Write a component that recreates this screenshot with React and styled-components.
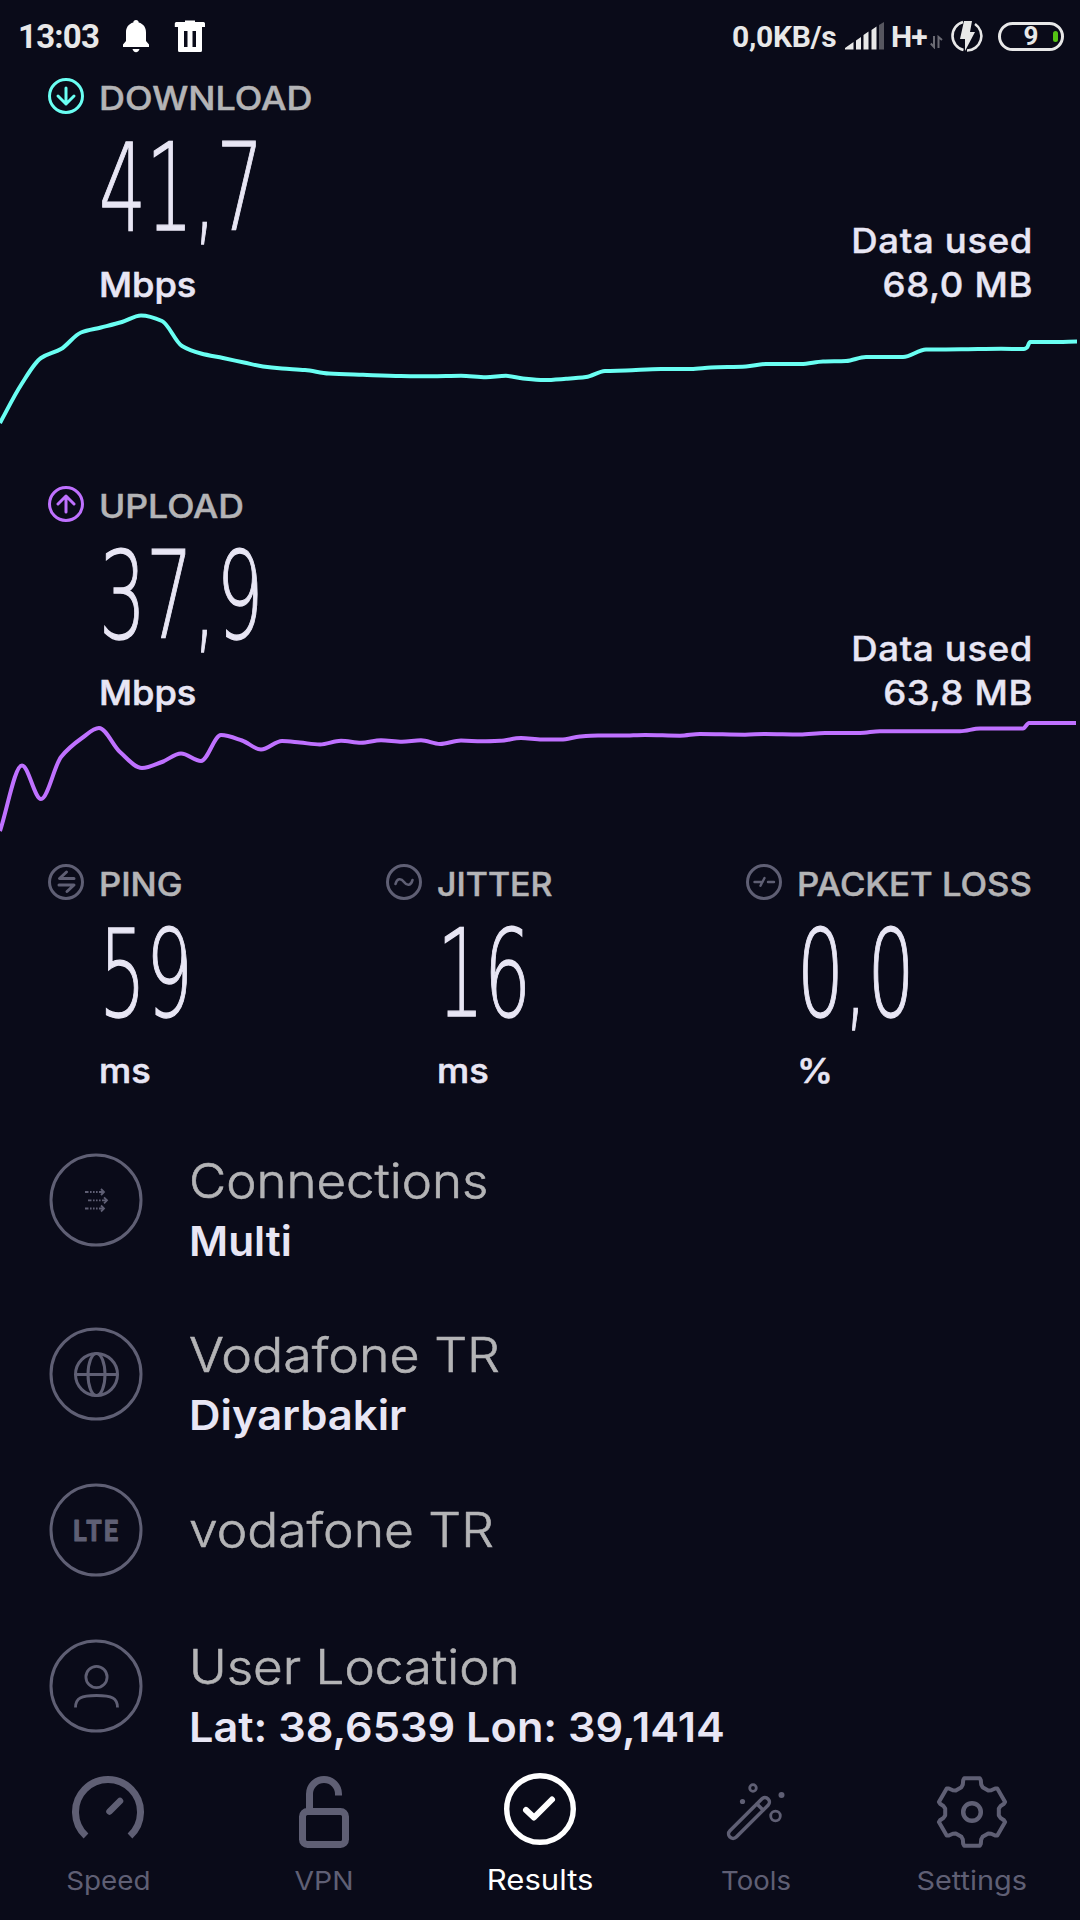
import React from 'react';
import styled, { createGlobalStyle } from 'styled-components';

const palette = {
  bg: '#0a0b19',
  text: '#e8e6f4',
  label: '#b4b4b6',
  icon: '#5f5f74',
  status: '#e8e8e8',
  download: '#6afff3',
  upload: '#bf71ff',
};

const GlobalStyle = createGlobalStyle`
  * {
    box-sizing: border-box;
  }
  body {
    margin: 0;
    background: ${palette.bg};
  }
  svg {
    display: block;
    flex-shrink: 0;
  }
`;

const Page = styled.div`
  width: 1080px;
  height: 1920px;
  display: flex;
  flex-direction: column;
  overflow: hidden;
  background: ${palette.bg};
  color: ${palette.text};
  font-family: Inter, 'Noto Sans', sans-serif;
  white-space: nowrap;
`;

const StatusBar = styled.header`
  height: 72px;
  padding: 0 16px 0 18px;
  display: flex;
  justify-content: space-between;
  align-items: center;
  font-family: Roboto, sans-serif;
  font-weight: 700;
  color: ${palette.status};
`;

const StatusGroup = styled.div`
  display: flex;
  align-items: center;
`;

const Clock = styled.span`
  width: 104px;
  font-size: 33px;
  letter-spacing: -0.8px;
`;

const StatusText = styled.span`
  width: ${({ $width }) => $width}px;
  font-size: 30px;
  letter-spacing: ${({ $spacing }) => $spacing || 0}px;
`;

const TrashIcon = styled.svg`
  margin-left: 24px;
`;

const SignalIcon = styled.svg`
  margin-right: 6px;
`;

const TrafficIcon = styled.svg`
  margin: 11px 6px 0 2px;
`;

const Battery = styled.div`
  position: relative;
  width: 66px;
  height: 29px;
  margin-left: 14px;
  border: 3px solid ${palette.status};
  border-radius: 15px;
  display: flex;
  justify-content: center;
  align-items: center;
  font-size: 26px;
  line-height: 1;
  &::after {
    content: '';
    position: absolute;
    right: 3px;
    top: 6px;
    width: 5px;
    height: 11px;
    border-radius: 3px;
    background: #55c314;
  }
`;

const SpeedSection = styled.section`
  display: flex;
  flex-direction: column;
  margin-bottom: ${({ $gap }) => $gap}px;
`;

const MetricHead = styled.div`
  height: 48px;
  display: flex;
  align-items: center;
  gap: 15px;
`;

const MetricLabel = styled.h2`
  margin: 5px 0 0;
  font-size: 32px;
  font-weight: 500;
  line-height: 48px;
  color: ${palette.label};
  -webkit-text-stroke: 0.5px ${palette.label};
  transform: scaleX(${({ $stretch }) => $stretch || 1});
  transform-origin: left;
`;

const MetricBody = styled.div`
  height: 188px;
  padding: 0 47px 1px 99px;
  display: flex;
  justify-content: space-between;
  align-items: flex-end;
`;

const SpeedHead = styled(MetricHead)`
  padding-left: 48px;
`;

const Digits = styled.div`
  height: 131px;
  width: 160px;
  font-family: 'DejaVu Sans', sans-serif;
  font-size: 122px;
  font-weight: 200;
  line-height: 137px;
  -webkit-text-stroke: 1.3px ${palette.text};
  transform: scaleX(0.606);
  transform-origin: left;
`;

const Unit = styled.div`
  margin-top: 12px;
  font-size: 34px;
  font-weight: 500;
  line-height: 44px;
  -webkit-text-stroke: 0.6px ${palette.text};
  transform: scaleX(1.065);
  transform-origin: left;
`;

const DataUsed = styled.div`
  font-size: 34px;
  font-weight: 500;
  line-height: 44px;
  text-align: right;
  letter-spacing: 0.6px;
  -webkit-text-stroke: 0.4px ${palette.text};
  transform: scaleX(1.075);
  transform-origin: right;
`;

const Latency = styled.section`
  display: flex;
  padding-left: 48px;
  height: 294px;
`;

const LatencyItem = styled.div`
  width: ${({ $width }) => $width}px;
`;

const LatencyValue = styled.div`
  padding-left: 51px;
`;

const Details = styled.ul`
  flex: 1;
  margin: 0;
  padding: 0 0 0 48px;
  list-style: none;
`;

const DetailRow = styled.li`
  height: ${({ $height }) => $height}px;
  display: flex;
  align-items: flex-start;
  gap: 45px;
`;

const DetailText = styled.div`
  min-height: 96px;
  display: flex;
  flex-direction: column;
  justify-content: center;
`;

const DetailTitle = styled.div`
  font-size: 48px;
  font-weight: 300;
  line-height: 58px;
  color: ${palette.label};
  -webkit-text-stroke: 0.6px ${palette.label};
  transform: scaleX(${({ $stretch }) => $stretch || 1});
  transform-origin: left;
`;

const DetailValue = styled.div`
  font-size: 41px;
  font-weight: 600;
  line-height: 62px;
  transform: scaleX(${({ $stretch }) => $stretch || 1});
  transform-origin: left;
`;

const NavBar = styled.nav`
  height: 160px;
  display: grid;
  grid-template-columns: repeat(5, 1fr);
`;

const NavItem = styled.a`
  display: flex;
  flex-direction: column;
  align-items: center;
  padding-top: ${({ $active }) => ($active ? 13 : 16)}px;
  gap: ${({ $active }) => ($active ? 17 : 15)}px;
  color: ${({ $active }) => ($active ? '#fff' : palette.icon)};
`;

const NavLabel = styled.span`
  font-size: ${({ $large }) => ($large ? 28 : 26)}px;
  line-height: 36px;
  transform: scaleX(${({ $stretch }) => $stretch || 1});
`;

const downloadPoints = [
  [0, 423], [20, 385], [40, 358], [60, 349], [80, 332.5], [100, 327.5], [121, 322], [140, 315.5],
  [161, 321], [181, 346], [200, 353.5], [222, 358], [243, 362.5], [262, 366.5], [281, 368.5],
  [304, 370], [328, 373.5], [362, 374.8], [400, 376], [430, 376.3], [460, 375.8], [485, 377.2],
  [505, 375.8], [522, 378.5], [543, 380], [565, 378.8], [585, 377], [604, 371], [625, 370.5],
  [660, 369], [690, 369], [710, 367.5], [745, 366.5], [765, 364], [800, 364], [822, 361.5],
  [845, 361], [865, 357], [902, 357], [925, 349.5], [960, 349.3], [1000, 348.8], [1023, 349],
  [1026, 347.5], [1029, 342], [1050, 342], [1076, 341.5],
].map(([x, y]) => [x ? x + 1 : x, y]);

const uploadPoints = [
  [0, 831], [22, 765.5], [41, 799], [61, 757], [82, 738], [99, 728], [120, 752], [142, 768],
  [162, 762], [181, 753.5], [201, 761], [221, 735], [242, 740.5], [261, 749.5], [282, 741],
  [300, 742.5], [320, 744.5], [341, 740.7], [361, 742.7], [381, 740.3], [402, 741.7],
  [421, 740.3], [440, 744], [461, 740.5], [482, 741.3], [500, 740.8], [521, 738], [542, 739.5],
  [561, 739.5], [580, 736.5], [598, 735.5], [622, 735.6], [645, 735], [680, 735.7], [700, 734],
  [745, 734.7], [765, 734], [800, 734.5], [825, 733], [860, 733], [880, 731.2], [960, 731.3],
  [980, 728.5], [1023, 728.5], [1029, 723], [1076, 723],
];

// cubic curve through the points, flat at local peaks so it never overshoots
const smoothPath = (points) => {
  const slope = (a, b) => (b[1] - a[1]) / (b[0] - a[0]);
  const tangents = points.map((p, i) => {
    if (i === 0) return slope(p, points[1]);
    if (i === points.length - 1) return slope(points[i - 1], p);
    const s0 = slope(points[i - 1], p);
    const s1 = slope(p, points[i + 1]);
    return s0 * s1 <= 0 ? 0 : (2 * s0 * s1) / (s0 + s1);
  });
  return points.reduce((d, p, i) => {
    if (i === 0) return `M${p[0]} ${p[1]}`;
    const prev = points[i - 1];
    const dx = (p[0] - prev[0]) / 3;
    return `${d}C${prev[0] + dx} ${prev[1] + dx * tangents[i - 1]} ${p[0] - dx} ${p[1] - dx * tangents[i]} ${p[0]} ${p[1]}`;
  }, '');
};

const Chart = ({ points, top, color }) => (
  <svg width='1080' height='130' viewBox={`0 ${top} 1080 130`} fill='none' stroke={color} strokeWidth='4'>
    <path d={smoothPath(points)} />
  </svg>
);

const RoundIcon = ({ color = palette.icon, strokeWidth = 3, children }) => (
  <svg
    width='36'
    height='36'
    viewBox='-18 -18 36 36'
    fill='none'
    stroke={color}
    strokeWidth={strokeWidth}
    strokeLinecap='round'
    strokeLinejoin='round'
  >
    <circle r='16.5' strokeWidth='3' />
    {children}
  </svg>
);

const DetailIcon = ({ children }) => (
  <svg width='96' height='96' viewBox='-48 -48 96 96' fill='none' stroke={palette.icon} strokeWidth='3'>
    <circle r='45' strokeWidth='3' />
    {children}
  </svg>
);

const NavIcon = ({ children }) => (
  <svg
    width='72'
    height='72'
    viewBox='0 0 72 72'
    fill='none'
    stroke='currentColor'
    strokeLinecap='round'
    strokeLinejoin='round'
  >
    {children}
  </svg>
);

const gearPath = () => {
  const corners = [];
  for (let i = 0; i < 6; i++) {
    [[-23, 27], [-18.5, 29], [-15.5, 33], [-13, 34.6], [13, 34.6], [15.5, 33], [18.5, 29], [23, 27]].forEach(([offset, r]) => {
      const a = ((i * 60 + offset - 90) * Math.PI) / 180;
      corners.push(`${(36 + r * Math.cos(a)).toFixed(2)} ${(36 + r * Math.sin(a)).toFixed(2)}`);
    });
  }
  return `M${corners.join('L')}Z`;
};

const ConnectionArrow = ({ x, y }) => (
  <g strokeWidth='1.8'>
    <path d={`M${x} ${y}h3.5M${x + 5} ${y}h1.6M${x + 8} ${y}h1.6M${x + 11} ${y}h1.6M${x + 14} ${y}h5`} />
    <path d={`M${x + 16} ${y - 3}l3 3l-3 3`} />
  </g>
);

const Status = () => (
  <StatusBar>
    <StatusGroup>
      <Clock>13:03</Clock>
      <svg width='28' height='34' viewBox='0 0 28 34' fill='#fff'>
        <path d='M14 1c1.600 0 2.700 1 2.700 2.600C21.500 4.900 24 8.500 24 13.500V22l3 3.500V28H1v-2.500L4 22v-8.500c0-5 2.500-8.600 7.300-9.900C11.300 2 12.400 1 14 1z' />
        <path d='M10.500 30h7c-.4 2-1.800 3.200-3.500 3.200S10.900 32 10.500 30z' />
      </svg>
      <TrashIcon width='32' height='34' viewBox='0 0 32 34' fill='#fff'>
        <path
          fillRule='evenodd'
          d='M11 3V1.500h10V3h8.500q1.500 0 1.500 1.500V8H.8V4.500Q.8 3 2.300 3zM4 8h24v23.500q0 1.500-1.500 1.500h-21Q4 33 4 31.500zM10 12v16h3.500V12zM18.500 12v16H22V12z'
        />
      </TrashIcon>
    </StatusGroup>
    <StatusGroup>
      <StatusText $width={113} $spacing={-0.3}>
        0,0KB/s
      </StatusText>
      <SignalIcon width='40' height='28' viewBox='0 0 40 28' fill={palette.status}>
        <path d='M0 27.500V26l8.500-6v7.500zM11 27.500V18.500l5-3.500v12.500zM18.500 27.500V13l5-3.500v18zM26.500 27.500V8l5-3.500v23z' />
        <path d='M34 27.500V3l5-3v27.500z' fill='#56565f' />
      </SignalIcon>
      <StatusText $width={37} $spacing={-1}>
        H+
      </StatusText>
      <TrafficIcon width='14' height='14' viewBox='0 0 14 14' stroke='#6b6b74' strokeWidth='2' fill='none'>
        <path d='M4 1v11L.8 8.500M8.500 13V2l3.500 3' />
      </TrafficIcon>
      <svg width='34' height='34' viewBox='-17 -17 34 34' fill='none'>
        <path
          d='M-3.500 14A14.500 14.500 0 0 1 -4 -14M8-12A14.500 14.500 0 0 1 0 14.500'
          stroke={palette.status}
          strokeWidth='2.6'
        />
        <path d='M-3-15h8L3-4h5L-2 15V3h-5z' fill={palette.status} />
      </svg>
      <Battery>9</Battery>
    </StatusGroup>
  </StatusBar>
);

const SpeedResult = ({ label, stretch, value, used, icon, points, top, color, gap }) => (
  <SpeedSection $gap={gap}>
    <SpeedHead>
      {icon}
      <MetricLabel $stretch={stretch}>{label}</MetricLabel>
    </SpeedHead>
    <MetricBody>
      <div>
        <Digits>{value}</Digits>
        <Unit>Mbps</Unit>
      </div>
      <DataUsed>
        Data used
        <br />
        {used}
      </DataUsed>
    </MetricBody>
    <Chart points={points} top={top} color={color} />
  </SpeedSection>
);

const LatencyResult = ({ label, stretch, value, unit, width, children }) => (
  <LatencyItem $width={width}>
    <MetricHead>
      {children}
      <MetricLabel $stretch={stretch}>{label}</MetricLabel>
    </MetricHead>
    <LatencyValue>
      <Digits>{value}</Digits>
      <Unit>{unit}</Unit>
    </LatencyValue>
  </LatencyItem>
);

const App = () => {
  return (
    <>
      <GlobalStyle />
      <Page>
        <Status />
        <SpeedResult
          label='DOWNLOAD'
          stretch={1.123}
          value='41,7'
          used='68,0 MB'
          points={downloadPoints}
          top={308}
          color={palette.download}
          gap={42}
          icon={
            <RoundIcon color={palette.download}>
              <path d='M0-8V8M-8 0L0 8L8 0' />
            </RoundIcon>
          }
        />
        <SpeedResult
          label='UPLOAD'
          stretch={1.11}
          value='37,9'
          used='63,8 MB'
          points={uploadPoints}
          top={716}
          color={palette.upload}
          gap={12}
          icon={
            <RoundIcon color={palette.upload}>
              <path d='M0 8V-8M-8 0L0-8L8 0' />
            </RoundIcon>
          }
        />

        <Latency>
          <LatencyResult label='PING' stretch={1.08} value='59' unit='ms' width={338}>
            <RoundIcon>
              <path d='M.5-10L-6.500-3.500H8M-7 3H8L1 9.500' />
            </RoundIcon>
          </LatencyResult>
          <LatencyResult label='JITTER' stretch={1.06} value='16' unit='ms' width={360}>
            <RoundIcon strokeWidth={2.6}>
              <path d='M-8.500 2C-7-4-3-4 0 0S7 4 8.500-2' />
            </RoundIcon>
          </LatencyResult>
          <LatencyResult label='PACKET LOSS' stretch={1.083} value='0,0' unit='%'>
            <RoundIcon strokeWidth={2.4}>
              <path d='M-9.500 0H-4M-3.500 3.800L.5-4M4 0H10M-4 0H-1.500' />
            </RoundIcon>
          </LatencyResult>
        </Latency>

        <Details>
          <DetailRow $height={174}>
            <DetailIcon>
              <ConnectionArrow x={-11} y={-8} />
              <ConnectionArrow x={-8} y={0.3} />
              <ConnectionArrow x={-11} y={8.5} />
            </DetailIcon>
            <DetailText>
              <DetailTitle $stretch={1.063}>Connections</DetailTitle>
              <DetailValue $stretch={1.035}>Multi</DetailValue>
            </DetailText>
          </DetailRow>
          <DetailRow $height={156}>
            <DetailIcon>
              <circle cx='.5' cy='.5' r='21' />
              <ellipse cx='.5' cy='.5' rx='8.500' ry='21' />
              <path d='M-20.500 .5h42' />
            </DetailIcon>
            <DetailText>
              <DetailTitle $stretch={1.08}>Vodafone TR</DetailTitle>
              <DetailValue $stretch={1.063}>Diyarbakir</DetailValue>
            </DetailText>
          </DetailRow>
          <DetailRow $height={156}>
            <DetailIcon>
              <text
                x='-27.500'
                y='11'
                fontSize='30'
                fontWeight='700'
                fontFamily='Roboto, sans-serif'
                textLength='54'
                transform='scale(0.83 1)'
                fill={palette.icon}
                strokeWidth='1.2'
                strokeLinejoin='round'
              >
                LTE
              </text>
            </DetailIcon>
            <DetailText>
              <DetailTitle $stretch={1.074}>vodafone TR</DetailTitle>
            </DetailText>
          </DetailRow>
          <DetailRow $height={122}>
            <DetailIcon>
              <circle cx='.5' cy='-9' r='10.600' strokeWidth='2.800' />
              <path d='M-20.500 21.500C-20.500 12-15 9.500 .5 9.500S21.500 12 21.500 21.500' strokeWidth='2.800' />
            </DetailIcon>
            <DetailText>
              <DetailTitle $stretch={1.066}>User Location</DetailTitle>
              <DetailValue $stretch={1.055}>Lat: 38,6539 Lon: 39,1414</DetailValue>
            </DetailText>
          </DetailRow>
        </Details>

        <NavBar>
          <NavItem>
            <NavIcon>
              <path d='M14 60A32.500 32.500 0 1 1 58 60' strokeWidth='7' strokeLinecap='butt' />
              <path d='M37.500 35.500L48 25' strokeWidth='6.500' />
            </NavIcon>
            <NavLabel $stretch={1.07}>Speed</NavLabel>
          </NavItem>
          <NavItem>
            <NavIcon>
              <rect x='14.500' y='35.500' width='43' height='33' rx='5' strokeWidth='7' />
              <path d='M21.500 34V18A14.500 14.500 0 0 1 50.500 18V19.500' strokeWidth='7' strokeLinecap='butt' />
            </NavIcon>
            <NavLabel $stretch={1.09}>VPN</NavLabel>
          </NavItem>
          <NavItem $active>
            <NavIcon>
              <circle cx='36' cy='36' r='33.300' strokeWidth='5.400' />
              <path d='M22 37L30 44.500L48 26.500' strokeWidth='6' />
            </NavIcon>
            <NavLabel $large $stretch={1.11}>
              Results
            </NavLabel>
          </NavItem>
          <NavItem>
            <NavIcon>
              <rect
                x='-27'
                y='-4.500'
                width='54'
                height='9'
                rx='4.500'
                transform='translate(29 42) rotate(-45)'
                strokeWidth='3.500'
              />
              <path d='M37 28L43 34' strokeWidth='3.500' />
              <circle cx='33' cy='12' r='3.300' strokeWidth='2.800' />
              <circle cx='55.500' cy='40' r='4.800' strokeWidth='2.800' />
              <circle cx='61.500' cy='19' r='3' fill='currentColor' stroke='none' />
              <circle cx='22.500' cy='25.500' r='2.600' fill='currentColor' stroke='none' />
            </NavIcon>
            <NavLabel $stretch={1.06}>Tools</NavLabel>
          </NavItem>
          <NavItem>
            <NavIcon>
              <path d={gearPath()} strokeWidth='4' />
              <circle cx='36' cy='36' r='8.800' strokeWidth='4.500' />
            </NavIcon>
            <NavLabel $stretch={1.11}>Settings</NavLabel>
          </NavItem>
        </NavBar>
      </Page>
    </>
  );
};

export default App;
